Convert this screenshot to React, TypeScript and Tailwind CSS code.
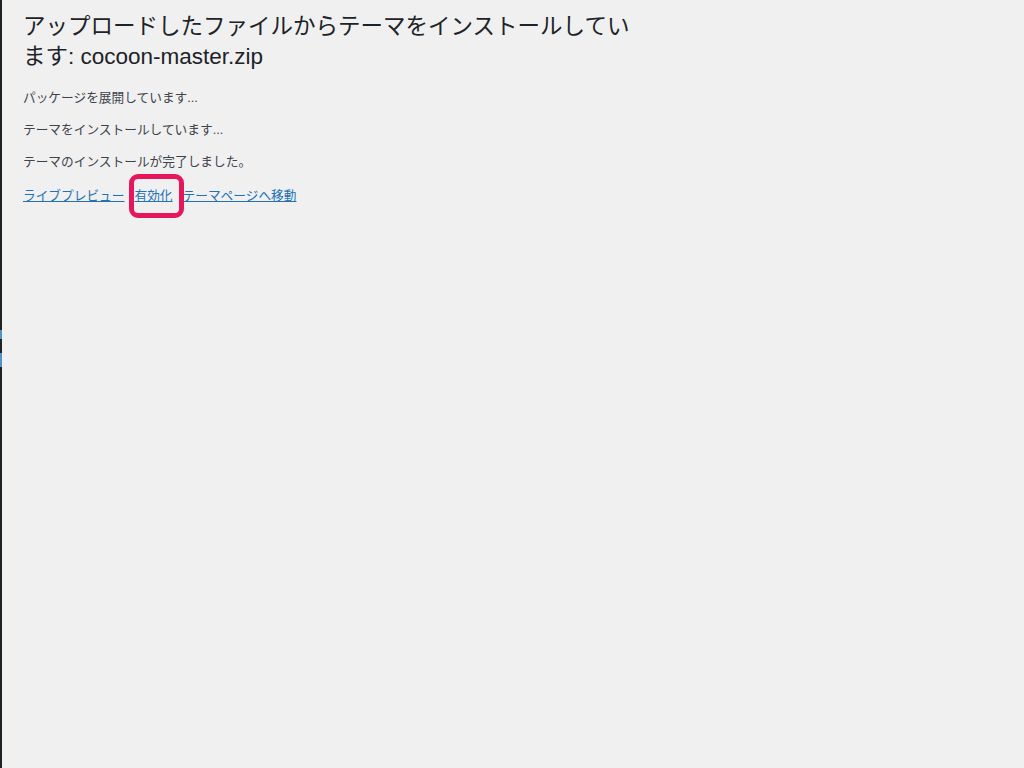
export default function App() {
  const jp = { fontFamily: '"Liberation Sans", "Noto Sans CJK JP", sans-serif' };
  return (
    <div className="relative flex min-h-[768px] w-full bg-[#f0f0f1]" style={jp}>
      {/* sidebar edge */}
      <div className="w-[2px] shrink-0 bg-[#1d2327]" />
      <div className="absolute left-0 top-[330px] h-[9px] w-[2px] bg-[#4f94c9]" />
      <div className="absolute left-0 top-[353px] h-[14px] w-[2px] bg-[#4f94c9]" />

      <main className="flex-1 pl-[21px] pt-[12px] text-[#1d2327]">
        <h1 className="w-[615px] text-[22.5px] leading-[30px] font-normal">
          アップロードしたファイルからテーマをインストールしています: cocoon-master.zip
        </h1>

        <div className="mt-[16px] space-y-[12px] text-[12.7px] leading-[20px] text-[#3c434a]">
          <p>パッケージを展開しています...</p>
          <p>テーマをインストールしています...</p>
          <p>テーマのインストールが完了しました。</p>
          <p className="flex items-center gap-[10px] pt-[2px]">
            <a href="#" className="text-[#2271b1] underline">ライブプレビュー</a>
            <span className="relative">
              <a href="#" className="text-[#2271b1] underline">有効化</a>
              <span className="absolute -left-[6px] -right-[11px] -top-[12px] -bottom-[12px] rounded-[9px] border-[5px] border-[#e5175a]" />
            </span>
            <a href="#" className="text-[#2271b1] underline">テーマページへ移動</a>
          </p>
        </div>
      </main>
    </div>
  );
}
